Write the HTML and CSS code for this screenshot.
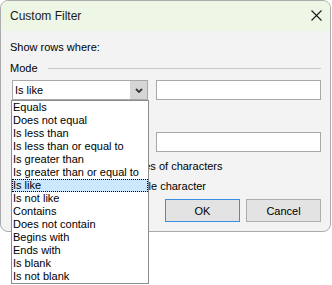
FILE: index.html
```html
<!DOCTYPE html>
<html>
<head>
<meta charset="utf-8">
<link rel="stylesheet" href="styles.css">
</head>
<body>
<div class="dialog">
  <div class="titlebar">
    <span class="title">Custom Filter</span>
    <svg class="close" width="11" height="11" viewBox="0 0 11 11"><path d="M0.5 0.5 L10.5 10.5 M10.5 0.5 L0.5 10.5" stroke="#1a1a1a" stroke-width="1.1" fill="none"/></svg>
  </div>
  <div class="content">
    <div class="label">Show rows where:</div>
    <div class="group"><span>Mode</span><span class="rule"></span></div>
    <div class="row first">
      <div class="combo"><span class="value">Is like</span><span class="drop"><svg width="8" height="5" viewBox="0 0 8 5"><path d="M1 1 L4 4 L7 1" stroke="#3a3a3a" stroke-width="1.8" fill="none"/></svg></span></div>
      <div class="input"></div>
    </div>
    <div class="row second">
      <div class="combo"><span class="value"></span><span class="drop"></span></div>
      <div class="input"></div>
    </div>
    <div class="hint hint1">Use * to represent any series of characters</div>
    <div class="hint hint2">Use ? to represent any single character</div>
    <div class="buttons">
      <button class="btn default">OK</button>
      <button class="btn">Cancel</button>
    </div>
  </div>
</div>
<ul class="listbox">
  <li>Equals</li>
  <li>Does not equal</li>
  <li>Is less than</li>
  <li>Is less than or equal to</li>
  <li>Is greater than</li>
  <li>Is greater than or equal to</li>
  <li class="selected">Is like</li>
  <li>Is not like</li>
  <li>Contains</li>
  <li>Does not contain</li>
  <li>Begins with</li>
  <li>Ends with</li>
  <li>Is blank</li>
  <li>Is not blank</li>
</ul>
</body>
</html>
```

FILE: styles.css
```css
html, body {
  margin: 0;
  padding: 0;
  background: #ffffff;
}
body {
  width: 332px;
  height: 285px;
  overflow: hidden;
  position: relative;
  font-family: "Liberation Sans", Arial, sans-serif;
  font-size: 11px;
  color: #000;
}
.dialog {
  box-sizing: border-box;
  width: 331px;
  height: 232px;
  border: 1px solid #ababab;
  border-radius: 8px;
  overflow: hidden;
  background: #f3f3f3;
  display: flex;
  flex-direction: column;
}
.titlebar {
  height: 30px;
  flex: none;
  background: #eef6e6;
  display: flex;
  align-items: center;
  justify-content: space-between;
  padding: 0 8px 0 9px;
}
.title {
  font-size: 12px;
  color: #1a1a1a;
}
.close {
  display: block;
  margin-top: -1px;
}
.content {
  padding: 0 9px;
  display: flex;
  flex-direction: column;
}
.label {
  line-height: 14px;
  margin-top: 9px;
}
.group {
  display: flex;
  align-items: center;
  line-height: 14px;
  margin-top: 7px;
}
.rule {
  flex: 1;
  height: 1px;
  background: #c8c8c8;
  margin-left: 10px;
}
.row {
  display: flex;
  height: 20px;
}
.row.first {
  margin-top: 5px;
}
.row.second {
  margin-top: 32px;
  height: 20px;
}
.combo {
  box-sizing: border-box;
  width: 136px;
  margin-left: 2px;
  border: 1px solid #a8a8a8;
  background: #fff;
  display: flex;
  align-items: stretch;
}
.combo .value {
  flex: 1;
  line-height: 18px;
  padding-left: 2px;
}
.combo .drop {
  width: 17px;
  background: #d6d6d6;
  display: flex;
  align-items: center;
  justify-content: center;
}
.combo .drop svg {
  display: block;
}
.input {
  box-sizing: border-box;
  width: 165px;
  margin-left: 8px;
  border: 1px solid #a8a8a8;
  background: #fff;
}
.hint {
  line-height: 14px;
  padding-left: 4px;
  white-space: nowrap;
}
.hint1 {
  margin-top: 7px;
}
.hint2 {
  margin-top: 6px;
}
.buttons {
  display: flex;
  justify-content: flex-end;
  gap: 6px;
  margin-top: 6px;
}
.btn {
  box-sizing: border-box;
  width: 75px;
  height: 23px;
  border: 1px solid #adadad;
  background: #e3e3e3;
  font-family: "Liberation Sans", Arial, sans-serif;
  font-size: 11px;
  color: #000;
  padding: 0;
  margin: 0;
}
.btn.default {
  border: 1px solid #3c8ee0;
}
.listbox {
  position: absolute;
  left: 11px;
  top: 100px;
  box-sizing: border-box;
  width: 138px;
  height: 184px;
  margin: 0;
  padding: 0;
  list-style: none;
  background: #fff;
  border: 1px solid #8c8c8c;
}
.listbox li {
  box-sizing: border-box;
  height: 13px;
  line-height: 13px;
  padding-left: 1px;
  white-space: nowrap;
}
.listbox li.selected {
  background: #cce8ff;
  outline: 1px dotted #000;
  outline-offset: -1px;
}
```
